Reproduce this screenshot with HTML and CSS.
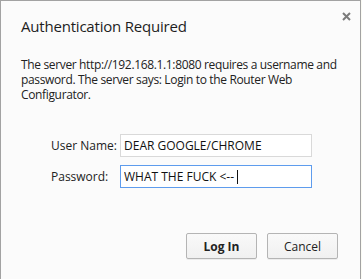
FILE: index.html
```html
<!DOCTYPE html>
<html lang="en">
<head>
    <meta charset="UTF-8">
    <title>Authentication Required</title>
    <link rel="stylesheet" href="styles.css">
</head>
<body>
    <div class="dialog">
        <div class="dialog-header">
            <h1>Authentication Required</h1>
            <span class="close-btn">
                <svg width="9" height="9" viewBox="0 0 9 9">
                    <path d="M1 1 L8 8 M8 1 L1 8" stroke="#7b7b7b" stroke-width="2"/>
                </svg>
            </span>
        </div>

        <p class="message">
            The server http://192.168.1.1:8080 requires a username and password. The server says: Login to the Router Web Configurator.
        </p>

        <form class="login-form">
            <label for="username">User Name:</label>
            <input type="text" id="username" value="DEAR GOOGLE/CHROME">

            <label for="password">Password:</label>
            <div class="input-wrap">
                <input type="text" id="password" class="focused" value="WHAT THE FUCK &lt;--">
                <span class="caret"></span>
            </div>
        </form>

        <div class="actions">
            <button class="btn btn-primary">Log In</button>
            <button class="btn">Cancel</button>
        </div>
    </div>
</body>
</html>
```

FILE: styles.css
```css
* {
    margin: 0;
    padding: 0;
    box-sizing: border-box;
}

body {
    font-family: 'Open Sans', 'Noto Sans', sans-serif;
    background: #fbfbf4;
    color: #222;
}

.dialog {
    width: 361px;
    height: 279px;
    background: #fbfbfb;
    border: 1px solid #a2a2a2;
    border-bottom: none;
}

.dialog-header {
    display: flex;
    justify-content: space-between;
    align-items: flex-start;
    padding: 15px 9px 0 20px;
}

.dialog-header h1 {
    font-size: 15px;
    font-weight: 400;
    line-height: 20px;
    letter-spacing: -0.2px;
    color: #1e1e1e;
}

.close-btn {
    margin-top: -4px;
    display: flex;
}

.message {
    margin: 21px 8px 0 20px;
    font-size: 12px;
    line-height: 15px;
    letter-spacing: -0.35px;
    color: #222;
}

.login-form {
    display: grid;
    grid-template-columns: 69px 192px;
    row-gap: 8px;
    align-items: center;
    margin: 32px 0 0 50px;
}

.login-form label {
    font-size: 12px;
    color: #222;
}

.login-form input {
    width: 100%;
    height: 23px;
    padding: 0 3px;
    font-family: inherit;
    font-size: 12px;
    color: #111;
    background: #fff;
    border: 1px solid #d9d9d9;
    outline: none;
}

.login-form input.focused {
    border-color: #5e9ced;
}

.input-wrap {
    position: relative;
    display: flex;
}

/* text cursor drawn over the focused field */
.caret {
    position: absolute;
    left: 117px;
    top: 5px;
    width: 1px;
    height: 14px;
    background: #111;
}

.actions {
    display: flex;
    justify-content: flex-end;
    gap: 10px;
    margin: 45px 22px 0 0;
}

.btn {
    width: 71px;
    height: 26px;
    font-family: inherit;
    font-size: 12px;
    color: #222;
    background: linear-gradient(#f9f9f9, #f0f0f0);
    border: 1px solid #b4b4b4;
    border-radius: 2px;
    box-shadow: 0 1px 0 rgba(0,0,0,0.06);
}

.btn-primary {
    font-weight: 700;
}
```
